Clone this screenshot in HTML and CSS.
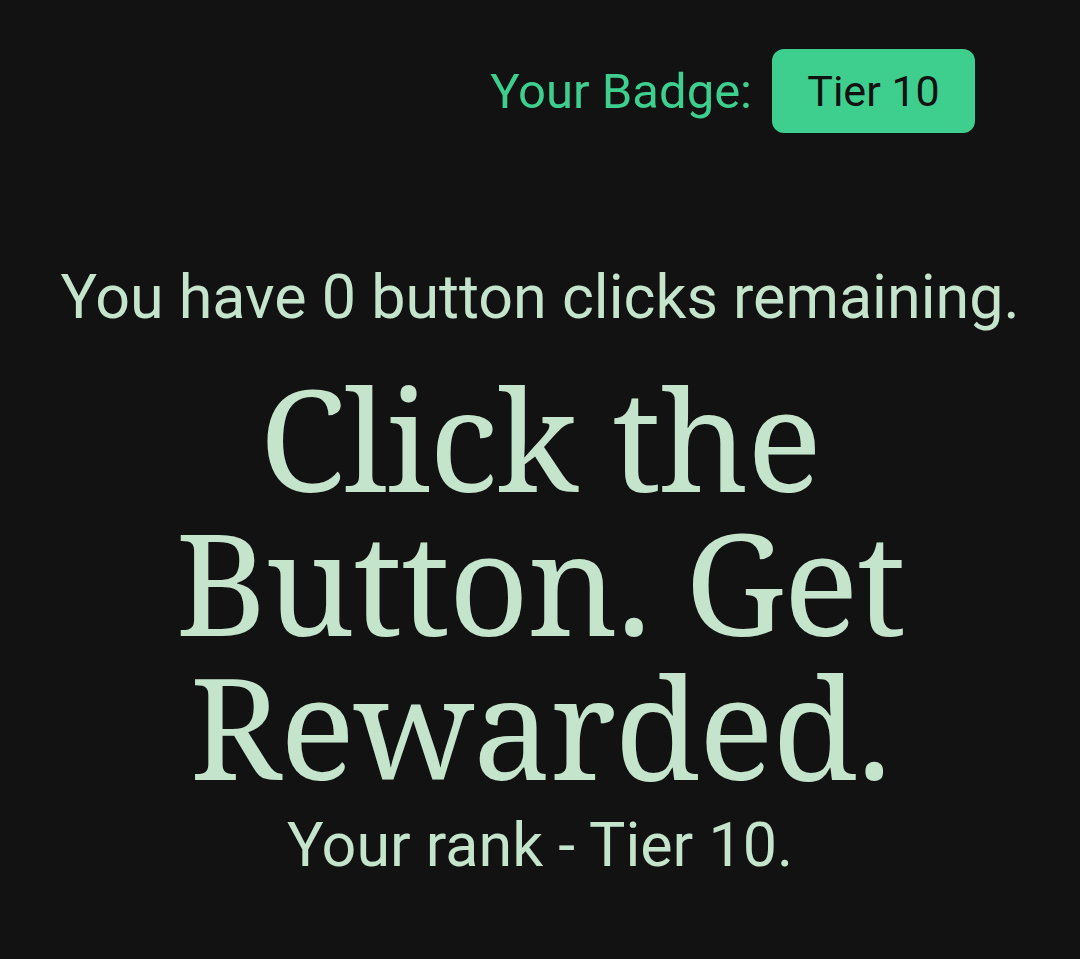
FILE: index.html
```html
<!DOCTYPE html>
<html lang="en">
<head>
<meta charset="utf-8">
<title>Click the Button</title>
<link rel="stylesheet" href="styles.css">
</head>
<body>
<header class="top">
  <span class="label">Your Badge:</span>
  <span class="badge">Tier 10</span>
</header>
<main class="hero">
  <p class="clicks">You have 0 button clicks remaining.</p>
  <h1 class="title">Click the Button. Get Rewarded.</h1>
  <p class="rank">Your rank - Tier 10.</p>
</main>
</body>
</html>
```
FILE: styles.css
```css
html, body {
  margin: 0;
  padding: 0;
  background: #121212;
}
body {
  font-family: Roboto, "Liberation Sans", sans-serif;
  color: #c4e4cc;
}
.top {
  display: flex;
  justify-content: flex-end;
  align-items: center;
  gap: 20px;
  padding: 49px 105px 0 0;
}
.label {
  color: #3ecf8e;
  font-size: 49px;
}
.badge {
  display: inline-flex;
  align-items: center;
  justify-content: center;
  width: 203px;
  height: 84px;
  box-sizing: border-box;
  border-radius: 12px;
  background: #3ecf8e;
  color: #111;
  font-size: 43px;
}
.hero {
  display: flex;
  flex-direction: column;
  align-items: center;
  text-align: center;
  padding-top: 128px;
}
.clicks {
  margin: 0;
  font-size: 61px;
  line-height: 1.2;
}
.title {
  margin: 32px 0 0;
  max-width: 780px;
  font-family: "Noto Serif", "DejaVu Serif", serif;
  font-weight: 400;
  font-size: 140px;
  letter-spacing: -1.5px;
  line-height: 144px;
}
.rank {
  margin: 11px 0 0;
  font-size: 61px;
  line-height: 1.2;
}
```
